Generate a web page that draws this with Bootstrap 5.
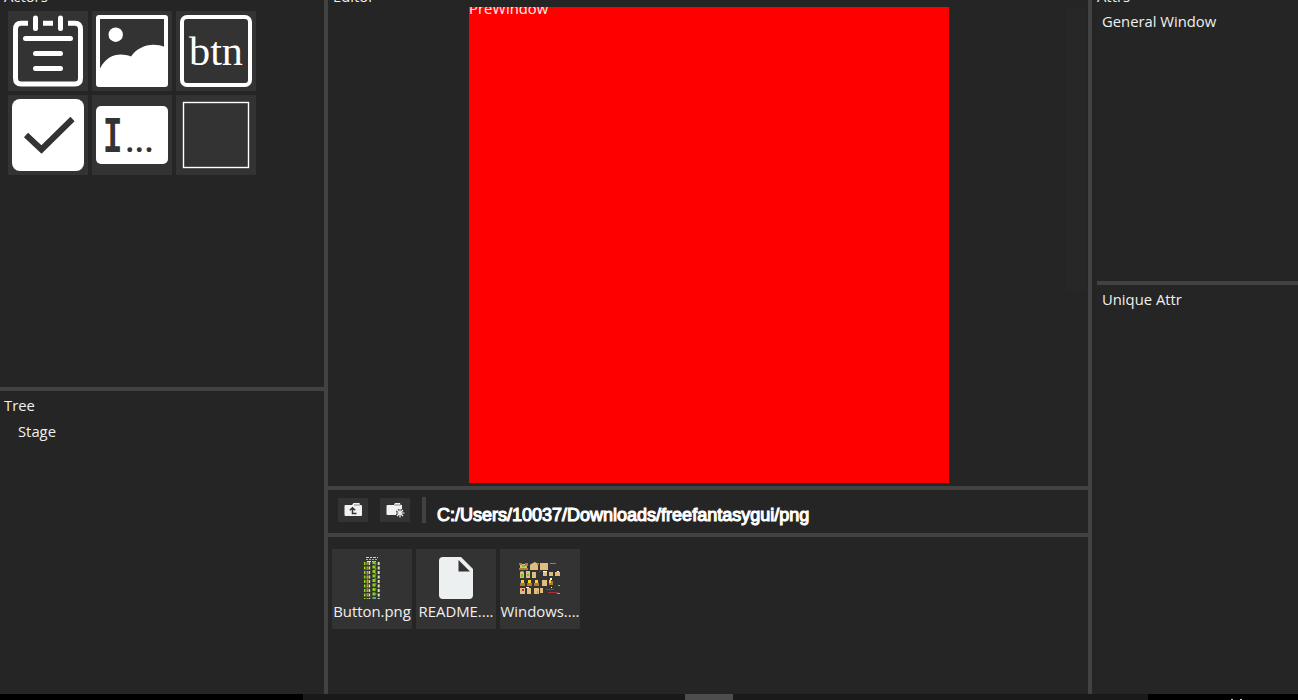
<!DOCTYPE html>
<html lang="en">
<head>
<meta charset="utf-8">
<meta name="viewport" content="width=device-width, initial-scale=1">
<title>GUI Editor</title>
<link href="https://cdn.jsdelivr.net/npm/bootstrap@5.3.0/dist/css/bootstrap.min.css" rel="stylesheet">
<style>
  body { background:#252525; color:#f0f0f0; font:14.8px/20px "Open Sans", sans-serif; }
  .left-pane { width:328px; border-right:4px solid #424242; }
  .mid-pane { width:764px; border-right:4px solid #424242; }
  .rule-b { border-bottom:4px solid #424242; }
  .actors { height:391px; }
  .cut-title { height:20px; margin-top:-14px; padding-left:5px; }
  .tile { width:80px; height:80px; background:#333; }
  .tile svg { display:block; }
  .tile-grid { gap:4px; width:256px; padding-left:8px; margin-top:5px; }
  .editor { height:490px; }
  .canvas-row { margin-top:1px; }
  .stage-win { width:480px; height:476px; background:#f00; margin-left:141px; }
  .stage-win span { display:block; margin-top:-9px; }
  .scroller { width:18px; height:284px; background:#272727; margin-left:118px; }
  .toolbar { height:47px; gap:12px; padding:8px 10px 0; }
  .tool { width:30px; height:24px; background:#333; }
  .tool svg { display:block; }
  .sep { width:4px; height:26px; margin-top:-1px; background:#424242; }
  .path-text { font:18px/24px "Liberation Sans", sans-serif; color:#fff; -webkit-text-stroke:1.1px #fff; margin:5px 0 0 -1px; }
  .files { gap:4px; padding:12px 4px; }
  .file-name { margin-top:-28px; height:20px; font-size:14.9px; }
  .tree-child { padding:6px 0 0 14px; }
  .attrs { margin-left:5px; }
  .general { height:285px; }
  .general-title { padding:5px 0 0 5px; }
  .unique { padding:4px 0 0 5px; }
  .bar { height:6px; background:#000; }
  .bar-a { width:303px; }
  .bar-b { width:382px; background:#191919; }
  .bar-c { width:48px; background:#4d4d4d; }
  .bar-d { width:415px; background:#1a1a1a; }
  .bar-e { padding-left:83px; gap:7px; }
  .bar-e i { width:2px; height:1px; background:#ccc; }
</style>
</head>
<body class="vh-100 overflow-hidden d-flex flex-column">
<main class="d-flex flex-grow-1 overflow-hidden">
  <aside class="left-pane flex-shrink-0 d-flex flex-column">
    <section class="actors rule-b">
      <div class="cut-title ps-1">Actors</div>
      <div class="tile-grid d-flex flex-wrap">
        <div class="tile"><svg width="80" height="80" fill="none" stroke="#fff" stroke-width="5">
          <path d="M20 12.3H13Q7.5 12.3 7.5 18.5V67Q7.5 73 13 73H67Q72.5 73 72.5 67V18.5Q72.5 12.3 67 12.3H60M35 12.3h10"/>
          <path stroke-linecap="round" d="M27.5 7v10.5M52.5 7v10.5M17.5 27.5h45M27.5 42.4h25M27.5 57.4h25"/></svg></div>
        <div class="tile"><svg width="80" height="80"><rect x="6" y="6" width="68" height="68" rx="1" fill="none" stroke="#fff" stroke-width="4"/><circle cx="23.7" cy="23.7" r="7.2" fill="#fff"/><path fill="#fff" d="M8 57.5C15 44 27 41 39 45.5C46 35 60 30.5 73 36V75H7z"/></svg></div>
        <div class="tile"><svg width="80" height="80"><rect x="6" y="6" width="68" height="68" rx="5" fill="none" stroke="#fff" stroke-width="4"/><text x="13" y="54" font-family="Liberation Serif" font-size="39" textLength="54" lengthAdjust="spacingAndGlyphs" fill="#fff">btn</text></svg></div>
        <div class="tile"><svg width="80" height="80"><rect x="4" y="4" width="72" height="72" rx="8" fill="#fff"/><path d="M18 40L33.5 54.5L64.5 24" fill="none" stroke="#333" stroke-width="6"/></svg></div>
        <div class="tile"><svg width="80" height="80" font-weight="700" fill="#333"><rect x="4" y="11" width="72" height="58" rx="5" fill="#fff"/><text transform="translate(11.1 57) scale(.62 1)" font-family="Liberation Mono" font-size="52">I</text><text x="33.7" y="57" font-family="Open Sans" font-size="28" letter-spacing="1.7">...</text></svg></div>
        <div class="tile"><svg width="80" height="80"><rect x="7.5" y="7.5" width="65" height="65" fill="none" stroke="#fff" stroke-width="1.4"/></svg></div>
      </div>
    </section>
    <section class="px-1 pt-1">
      <div>Tree</div>
      <div class="tree-child">Stage</div>
    </section>
  </aside>

  <div class="mid-pane flex-shrink-0 d-flex flex-column">
    <section class="editor rule-b">
      <div class="cut-title">Editor</div>
      <div class="canvas-row d-flex">
        <div class="stage-win overflow-hidden"><span>PreWindow</span></div>
        <div class="scroller"></div>
      </div>
    </section>
    <section class="toolbar rule-b d-flex align-items-start">
      <div class="tool"><svg width="30" height="24"><path fill="#f2f2f2" d="M6.5 8Q6.5 7 7.5 7H14L15.5 5H21.5L22 7H23Q24 7 24 8V17Q24 18 23 18H7.5Q6.5 18 6.5 17z"/><path d="M16 7h6" stroke="#888"/><path fill="none" stroke="#333" stroke-width="1.5" d="M18.500 15.500H14.500V10.500M11.800 12.300L14.500 9.700L17.200 12.300"/></svg></div>
      <div class="tool"><svg width="30" height="24"><path fill="#f2f2f2" d="M6.500 8Q6.500 7 7.500 7H14L15 5H20L20.500 7H22V17H7.500Q6.500 17 6.500 16z"/><path d="M14.500 7h6" stroke="#888"/><circle cx="20" cy="15" r="4" fill="#333"/><path stroke="#f2f2f2" stroke-width="1.2" d="M20 10.500v9M15.500 15h9M17 12l6 6M23 12l-6 6"/></svg></div>
      <div class="sep"></div>
      <div class="path-text text-nowrap">C:/Users/10037/Downloads/freefantasygui/png</div>
    </section>
    <section class="files d-flex">
      <div class="tile text-center text-nowrap"><svg width="80" height="80" fill="none">
        <path stroke="#d8d8b8" stroke-dasharray="3 1 2 1" d="M34 8.500h12"/><path stroke="#a5cf20" stroke-dasharray="2 1" d="M34 10.500h12"/><path stroke="#ddd" stroke-dasharray="4 1" d="M35 12.500h10"/>
        <path stroke="#8ddc20" stroke-width="1.5" stroke-dasharray="3 1.5" d="M32.700 13v37"/>
        <path stroke="#a8a92c" stroke-width="2" stroke-dasharray="3 1.5" d="M35.500 13v37"/>
        <path stroke="#dcd8b8" stroke-width="1.3" stroke-dasharray="3 1.5" d="M37.500 13v37"/>
        <path stroke="#82d916" stroke-width="3" stroke-dasharray="3 1.5" d="M42 12v38"/>
        <path stroke="#b76c3c" stroke-width="1.5" stroke-dasharray="2 3" d="M43.500 14v32M35.500 14v32"/>
        <path stroke="#d0e6b2" stroke-width="2" stroke-dasharray="3 1.5" d="M46.700 13v37"/><path stroke="#2aa6ff" stroke-width="2" d="M41 49h3"/></svg>
        <div class="file-name">Button.png</div></div>
      <div class="tile text-center text-nowrap"><svg width="80" height="80"><path fill="#ecf0f1" d="M27 8H45L57 20V46Q57 50 53 50H27Q23 50 23 46V12Q23 8 27 8z"/><path fill="#333" d="M42.500 11V22.500H54z"/></svg>
        <div class="file-name">README....</div></div>
      <div class="tile text-center text-nowrap"><svg width="80" height="80">
        <g fill="#dfbd80"><path d="M20 15h7v6h-7zM31 15l4-2 3 2v6h-8v-5zM40 14h8v7h-8zM20 23l2-1 2 1v6h-4zM26 22h4v7h-4zM32 23h4v6h-4zM43 23h4v4h-4zM49 23h4v4h-4zM55 23h5v4h-5zM42 31h5v6h-5zM20 39h5v6h-5zM27 39h4v6h-4zM34 39h5v6h-5zM40 39h3v5h-3z"/></g>
        <g fill="#b17837"><path d="M19 14h3v2h-3zM25 14h3v3h-3zM19 19h9v2h-9zM37 14h2v2h-2zM50 14h6v1h-6zM20 34h5v3h-5zM27 34h5v3h-5zM34 34h5v3h-5zM49 32h4v4h-4z"/></g>
        <path fill="#ffd31c" d="M21 31h3v3h-3zM28 31h3v3h-3zM35 31h3v3h-3zM49 31h2v3h-2z"/>
        <path fill="#6cc32b" d="M22 16h3v2h-3zM21 25h2v3h-2zM27 25h2v2h-2zM37 42h1v3h-1z"/>
        <path fill="#a83331" d="M22 40h2v2h-2zM46 40h8v1h-8zM48 43h10v1h-10zM39 22h2v1h-2z"/>
        <path fill="#fff" d="M50 29h2v2h-2zM43 22h4v1h-4zM57 22h2v1h-2zM26 38h3v1h-3zM51 38h1v1h-1z"/>
        <path fill="#29d8e5" d="M58 36h2v1h-2zM57 44h3v1h-3z"/></svg>
        <div class="file-name">Windows....</div></div>
    </section>
  </div>

  <aside class="flex-grow-1 d-flex flex-column">
    <section class="general rule-b attrs">
      <div class="cut-title ps-0">Attrs</div>
      <div class="general-title">General Window</div>
    </section>
    <section class="attrs unique">Unique Attr</section>
  </aside>
</main>
<footer class="bar d-flex flex-shrink-0">
  <div class="bar-a"></div><div class="bar-b"></div><div class="bar-c"></div><div class="bar-d"></div>
  <div class="bar-e d-flex align-items-end flex-grow-1"><i></i><i></i></div>
</footer>
<script src="https://cdn.jsdelivr.net/npm/bootstrap@5.3.0/dist/js/bootstrap.bundle.min.js"></script>
</body>
</html>
